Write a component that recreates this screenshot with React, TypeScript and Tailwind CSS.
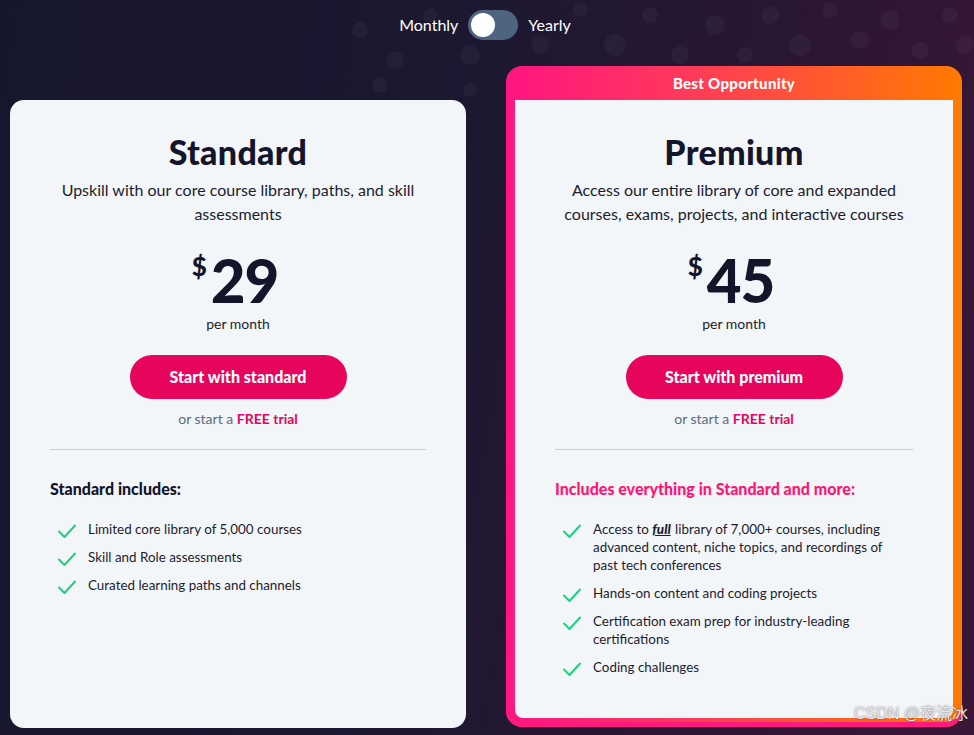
import React from "react";

const Check = () => (
  <svg width="20" height="16" viewBox="0 0 20 16" className="shrink-0">
    <polyline points="2,8.5 7.5,14 18,2.5" fill="none" stroke="#1ecf7e" strokeWidth="2" strokeLinecap="round" strokeLinejoin="round" />
  </svg>
);

const dots: [number, number, number][] = [
  [360, 30, 8], [395, 60, 9], [430, 15, 7], [470, 55, 10], [505, 20, 8], [540, 45, 9], [580, 10, 7],
  [615, 45, 11], [650, 15, 8], [680, 55, 9], [715, 25, 10], [745, 55, 8], [770, 15, 9], [800, 45, 11],
  [830, 10, 8], [860, 40, 9], [890, 20, 10], [920, 50, 9], [950, 15, 8], [965, 45, 9], [740, 85, 7],
  [640, 80, 8], [560, 80, 9], [470, 90, 7], [380, 85, 8], [900, 80, 8],
];

function Feature({ children }: { children: React.ReactNode }) {
  return (
    <li className="flex gap-[11px] items-start">
      <span className="pl-[7px] h-[18px] flex items-center pt-[4px]"><Check /></span>
      <span className="text-[13.4px] leading-[18px] text-[#1c1d2e] max-w-[300px]">{children}</span>
    </li>
  );
}

export default function App() {
  const font = { fontFamily: "Lato, 'Noto Sans', sans-serif" };
  return (
    <div
      className="relative w-[974px] h-[735px] overflow-hidden bg-[linear-gradient(100deg,#16162c_0%,#1b1830_40%,#2b1633_75%,#3b1737_100%)]"
      style={font}
    >
      <svg className="absolute inset-0 pointer-events-none" width="974" height="160">
        {dots.map(([x, y, r], i) => (
          <circle key={i} cx={x} cy={y} r={r} fill="rgba(255,255,255,0.035)" />
        ))}
      </svg>
      <div className="relative flex flex-col h-full">
        <div className="flex items-center justify-center gap-[10px] h-[50px] text-white text-[16px] pr-[4px]">
          <span>Monthly</span>
          <div className="w-[50px] h-[30px] rounded-full bg-[#4e6480] flex items-center px-[3px]">
            <div className="w-[24px] h-[24px] rounded-full bg-white" />
          </div>
          <span>Yearly</span>
        </div>
        <div className="flex gap-[40px] pl-[10px] pt-[16px]">
          <div className="mt-[34px] w-[456px] h-[628px] rounded-[14px] bg-[#f3f6f9] px-[40px] pt-[32px]">
            <Body
              title="Standard"
              desc={<>Upskill with our core course library, paths, and skill assessments</>}
              price="29"
              btn="Start with standard"
            />
            <div className="mt-[27px] text-[16px] font-black text-[#14152a]">Standard includes:</div>
            <ul className="mt-[19px] flex flex-col gap-[10px]">
              <Feature>Limited core library of 5,000 courses</Feature>
              <Feature>Skill and Role assessments</Feature>
              <Feature>Curated learning paths and channels</Feature>
            </ul>
          </div>
          <div className="w-[456px] h-[661px] rounded-[16px] bg-[linear-gradient(90deg,#ff1581_0%,#ff3a5a_40%,#ff7a00_100%)] px-[9px] pb-[9px] flex flex-col shadow-[inset_0_-5px_0_#ff1a7f]">
            <div className="h-[34px] flex items-center justify-center text-white text-[15px] font-black tracking-[0.3px]">
              Best Opportunity
            </div>
            <div className="flex-1 bg-[#f3f6f9] rounded-b-[8px] px-[40px] pt-[32px]">
              <Body
                title="Premium"
                desc={<>Access our entire library of core and expanded courses, exams, projects, and interactive courses</>}
                price="45"
                btn="Start with premium"
              />
              <div className="mt-[27px] text-[16px] font-black text-[#ff1675]">Includes everything in Standard and more:</div>
              <ul className="mt-[19px] flex flex-col gap-[10px]">
                <Feature>
                  Access to <b className="italic underline font-black pr-[1px]">full</b> library of 7,000+ courses, including advanced content, niche topics, and recordings of past tech conferences
                </Feature>
                <Feature>Hands-on content and coding projects</Feature>
                <Feature>Certification exam prep for industry-leading certifications</Feature>
                <Feature>Coding challenges</Feature>
              </ul>
            </div>
          </div>
        </div>
      </div>
      <div
        className="absolute right-[6px] bottom-[9px] text-[16px] text-[#e8e8ee] [text-shadow:0_0_2px_rgba(0,0,0,0.6)]"
        style={{ fontFamily: "'Liberation Sans', 'Noto Sans CJK SC', sans-serif" }}
      >
        CSDN @夜流冰
      </div>
    </div>
  );
}

function Body({ title, desc, price, btn }: { title: string; desc: React.ReactNode; price: string; btn: string }) {
  return (
    <div className="flex flex-col items-center text-center">
      <h2 className="text-[34px] leading-[40px] font-black text-[#14152a] tracking-[0.3px]">{title}</h2>
      <p className="mt-[6px] text-[16px] leading-[24px] text-[#1c1d2e] px-[4px]">{desc}</p>
      <div className="mt-[26px] h-[56px] flex items-start text-[#14152a] pr-[6px]">
        <span className="text-[26px] font-black leading-[26px] mt-[1px] mr-[4px]">$</span>
        <span className="text-[60px] font-black leading-[56px] tracking-[-1px]">{price}</span>
      </div>
      <div className="mt-[6px] text-[14px] leading-[20px] text-[#1c1d2e]">per month</div>
      <button className="mt-[21px] w-[217px] h-[44px] rounded-full bg-[#e6045d] text-white text-[16px] font-black">
        {btn}
      </button>
      <div className="mt-[9px] text-[14px] text-[#5b6b80]">
        or start a <span className="font-bold text-[#e6045d]">FREE trial</span>
      </div>
      <div className="mt-[20px] w-full h-px bg-[#bcd0e2]" />
    </div>
  );
}
